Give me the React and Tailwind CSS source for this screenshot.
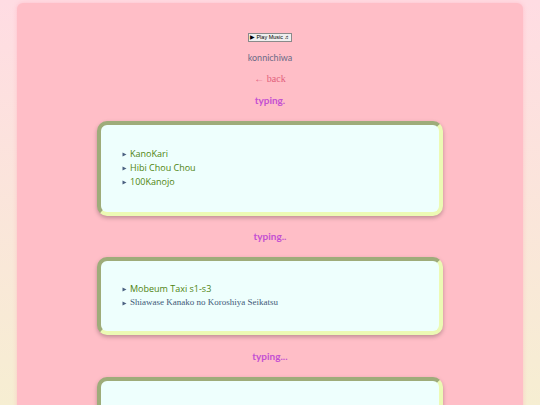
export default function App() {
  const Card = ({ children, pt = "pt-[21px]", pb = "pb-[21px]" }) => (
    <div className="w-[346px] rounded-[10px] border-4 border-t-[#9eac7a] border-l-[#9eac7a] border-b-[#ecfab4] border-r-[#ecfab4] bg-[#eefffd] shadow-[0_2px_4px_rgba(0,0,0,0.25)]">
      <ul className={`${pt} ${pb} pl-[21px] flex flex-col`}>{children}</ul>
    </div>
  );
  const Item = ({ children, serif }) => (
    <li className="flex items-center h-[14px]">
      <span className="w-[8px] flex items-center">
        <svg width="5" height="5" viewBox="0 0 5 5">
          <path d="M0.5 0.5 L4.5 2.5 L0.5 4.5 Z" fill="#4a6080" />
        </svg>
      </span>
      <span
        className={
          serif
            ? "text-[9px] text-[#3f5a78] [font-family:'Liberation_Serif',serif]"
            : "text-[9px] text-[#4f8410] [font-family:'Open_Sans',sans-serif]"
        }
      >
        {children}
      </span>
    </li>
  );
  const Typing = ({ children }) => (
    <div className="h-[12px] flex items-center justify-center text-[10px] font-bold text-[#c450d2] [font-family:Lato,sans-serif]">
      {children}
    </div>
  );
  return (
    <div className="w-[540px] h-[405px] overflow-hidden bg-gradient-to-b from-[#ffdce3] to-[#f6eed2] px-[17px] pt-[3px]">
      <div className="h-[500px] rounded-[6px] bg-[#ffbec7] shadow-[0_0_4px_rgba(255,150,170,0.4)] flex flex-col items-center pt-[30px]">
        <button className="h-[9px] px-[1px] flex items-center bg-[#efefef] border border-[#8a8a8a] text-[5.5px] leading-none text-black [font-family:'Liberation_Sans',sans-serif]">
          {"\u25B6\uFE0E Play Music \u266C"}
        </button>
        <div className="mt-[10px] h-[12px] flex items-center text-[9px] text-[#6a6a86] [font-family:Lato,sans-serif]">
          konnichiwa
        </div>
        <div className="mt-[8px] h-[12px] flex items-center text-[10px] text-[#e2607c] [font-family:'Liberation_Serif',serif]">
          ← back
        </div>
        <div className="mt-[10px]">
          <Typing>typing.</Typing>
        </div>
        <div className="mt-[15px]">
          <Card pt="pt-[22px]" pb="pb-[23px]">
            <Item>KanoKari</Item>
            <Item>Hibi Chou Chou</Item>
            <Item>100Kanojo</Item>
          </Card>
        </div>
        <div className="mt-[14px]">
          <Typing>typing..</Typing>
        </div>
        <div className="mt-[15px]">
          <Card>
            <Item>Mobeum Taxi s1-s3</Item>
            <Item serif>Shiawase Kanako no Koroshiya Seikatsu</Item>
          </Card>
        </div>
        <div className="mt-[15px]">
          <Typing>typing...</Typing>
        </div>
        <div className="mt-[15px]">
          <div className="w-[346px] h-[80px] rounded-[10px] border-4 border-t-[#9eac7a] border-l-[#9eac7a] border-b-[#ecfab4] border-r-[#ecfab4] bg-[#eefffd] shadow-[0_2px_4px_rgba(0,0,0,0.25)]" />
        </div>
      </div>
    </div>
  );
}
